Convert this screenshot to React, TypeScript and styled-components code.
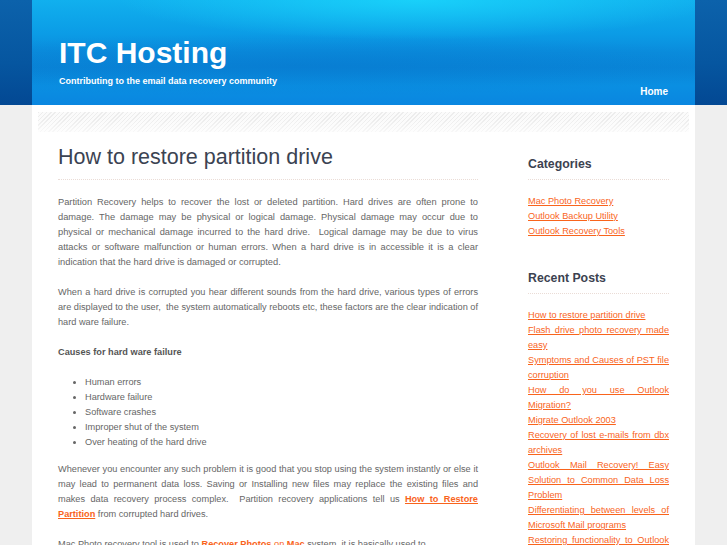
import styled, { createGlobalStyle } from 'styled-components';

const GlobalStyle = createGlobalStyle`
  html, body {
    margin: 0;
    padding: 0;
  }
  body {
    font-family: "Liberation Sans", Arial, sans-serif;
    background:
      linear-gradient(180deg, #0c62ab 0%, #0656a0 60%, #034893 100%) top / 100% 105px no-repeat,
      #efefef;
  }
`;

const Page = styled.div`
  width: 663px;
  margin: 0 auto;
`;

const Header = styled.header`
  height: 105px;
  display: flex;
  justify-content: space-between;
  padding: 0 27px;
  box-sizing: border-box;
  background:
    radial-gradient(ellipse 45% 38% at 58% 0%, rgba(28, 222, 255, 0.7), rgba(28, 222, 255, 0) 100%),
    radial-gradient(ellipse 70% 30% at 40% 62%, rgba(6, 110, 200, 0.35), rgba(6, 110, 200, 0) 100%),
    linear-gradient(180deg, #11b0ee 0%, #0b9ce6 32%, #0a8cdc 50%, #0986d8 64%, #0a8fe2 82%, #0a86e0 100%);
`;

const Brand = styled.div`
  padding-top: 38px;
  color: #fff;
`;

const SiteTitle = styled.h1`
  margin: 0;
  font-size: 30px;
  line-height: 30px;
  font-weight: bold;
`;

const Tagline = styled.p`
  margin: 7px 0 0;
  font-size: 9px;
  line-height: 12px;
  font-weight: bold;
`;

const Nav = styled.nav`
  align-self: flex-end;
  margin-bottom: 6px;
`;

const NavLink = styled.a`
  color: #fff;
  font-size: 10px;
  line-height: 12px;
  font-weight: bold;
  text-decoration: none;
`;

const Panel = styled.div`
  background: #fff;
  padding: 7px 0 40px;
`;

const Stripes = styled.div`
  height: 20px;
  margin: 0 6px;
  background:
    linear-gradient(180deg, rgba(255, 255, 255, 0) 40%, rgba(255, 255, 255, 0.6) 100%),
    repeating-linear-gradient(135deg, #ededed 0 1px, #fbfbfb 1px 3px);
`;

const Columns = styled.div`
  display: grid;
  grid-template-columns: 420px 141px;
  column-gap: 50px;
  padding: 13px 26px 0;
`;

const Article = styled.article`
  color: #666;
  font-size: 9.2px;
  line-height: 15px;
`;

const PostTitle = styled.h2`
  margin: 0 0 15px;
  padding-bottom: 10px;
  font-size: 21.5px;
  line-height: 24px;
  font-weight: normal;
  color: #3b4352;
  border-bottom: 1px dotted #eadcd6;
`;

const Para = styled.p<{ $size?: number }>`
  margin: 0 0 15px;
  text-align: justify;
  font-size: ${(p) => (p.$size ? `${p.$size}px` : 'inherit')};
`;

const Strong = styled.strong`
  color: #555;
`;

const Bullets = styled.ul`
  margin: 0 0 12px;
  padding-left: 27px;
  li {
    line-height: 15px;
  }
`;

const TextLink = styled.a<{ $bold?: boolean; $plain?: boolean }>`
  color: #f9641c;
  font-weight: ${(p) => (p.$bold ? 'bold' : 'normal')};
  text-decoration: ${(p) => (p.$plain ? 'none' : 'underline')};
`;

const Sidebar = styled.aside`
  padding-top: 12px;
`;

const Widget = styled.section`
  margin-bottom: 32px;
`;

const WidgetTitle = styled.h3`
  margin: 0 0 14px;
  padding-bottom: 7px;
  font-size: 12.3px;
  line-height: 15px;
  font-weight: bold;
  color: #3c4250;
  border-bottom: 1px dotted #eadcd6;
`;

const LinkList = styled.ul`
  list-style: none;
  margin: 0;
  padding: 0;
  font-size: 9.2px;
  line-height: 15px;
  text-align: justify;
`;

const categories = ['Mac Photo Recovery', 'Outlook Backup Utility', 'Outlook Recovery Tools'];

const recent = [
  'How to restore partition drive',
  'Flash drive photo recovery made easy',
  'Symptoms and Causes of PST file corruption',
  'How do you use Outlook Migration?',
  'Migrate Outlook 2003',
  'Recovery of lost e-mails from dbx archives',
  'Outlook Mail Recovery! Easy Solution to Common Data Loss Problem',
  'Differentiating between levels of Microsoft Mail programs',
  'Restoring functionality to Outlook Express',
  'Mac Photo Recovery software',
];

const causes = [
  'Human errors',
  'Hardware failure',
  'Software crashes',
  'Improper shut of the system',
  'Over heating of the hard drive',
];

export default function App() {
  return (
    <>
      <GlobalStyle />
      <Page>
        <Header>
          <Brand>
            <SiteTitle>ITC Hosting</SiteTitle>
            <Tagline>Contributing to the email data recovery community</Tagline>
          </Brand>
          <Nav>
            <NavLink href="#">Home</NavLink>
          </Nav>
        </Header>
        <Panel>
          <Stripes />
          <Columns>
            <Article>
              <PostTitle>How to restore partition drive</PostTitle>
              <Para $size={9.3}>
                Partition Recovery helps to recover the lost or deleted partition. Hard drives are often prone to
                damage. The damage may be physical or logical damage. Physical damage may occur due to physical or
                mechanical damage incurred to the hard drive.{'\u00a0'} Logical damage may be due to virus attacks or
                software malfunction or human errors. When a hard drive is in accessible it is a clear indication that
                the hard drive is damaged or corrupted.
              </Para>
              <Para>
                When a hard drive is corrupted you hear different sounds from the hard drive, various types of errors
                are displayed to the user,{'\u00a0'} the system automatically reboots etc, these factors are the clear
                indication of hard ware failure.
              </Para>
              <Para>
                <Strong>Causes for hard ware failure</Strong>
              </Para>
              <Bullets>
                {causes.map((c) => (
                  <li key={c}>{c}</li>
                ))}
              </Bullets>
              <Para>
                Whenever you encounter any such problem it is good that you stop using the system instantly or else it
                may lead to permanent data loss. Saving or Installing new files may replace the existing files and
                makes data recovery process complex.{'\u00a0'} Partition recovery applications tell us{' '}
                <TextLink $bold href="#">
                  How to Restore Partition
                </TextLink>{' '}
                from corrupted hard drives.
              </Para>
              <Para>
                Mac Photo recovery tool is used to{' '}
                <TextLink $bold $plain href="#">
                  Recover Photos
                </TextLink>{' '}
                <TextLink $plain href="#">
                  on
                </TextLink>{' '}
                <TextLink $bold $plain href="#">
                  Mac
                </TextLink>{' '}
                system, it is basically used to
                <br />
                recover deleted, lost or formatted photos from the Mac hard drive and other storage media.
              </Para>
            </Article>
            <Sidebar>
              <Widget>
                <WidgetTitle>Categories</WidgetTitle>
                <LinkList>
                  {categories.map((c) => (
                    <li key={c}>
                      <TextLink href="#">{c}</TextLink>
                    </li>
                  ))}
                </LinkList>
              </Widget>
              <Widget>
                <WidgetTitle>Recent Posts</WidgetTitle>
                <LinkList>
                  {recent.map((r) => (
                    <li key={r}>
                      <TextLink href="#">{r}</TextLink>
                    </li>
                  ))}
                </LinkList>
              </Widget>
            </Sidebar>
          </Columns>
        </Panel>
      </Page>
    </>
  );
}
